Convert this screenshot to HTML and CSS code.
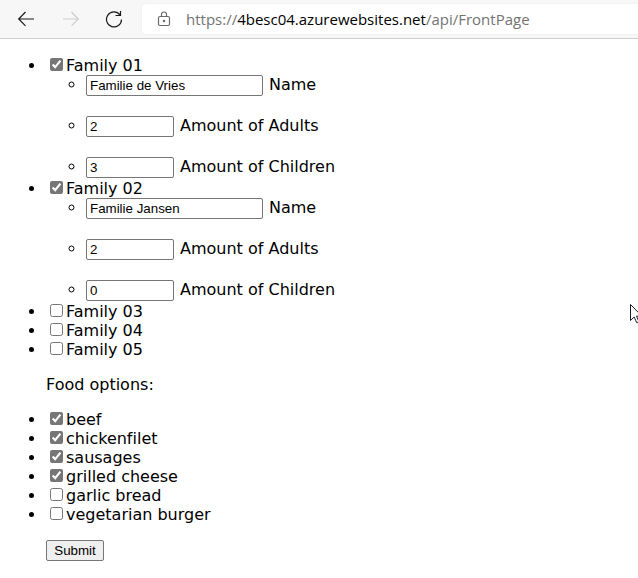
FILE: index.html
```html
<!DOCTYPE html>
<html lang="en">
<head>
<meta charset="utf-8">
<title>FrontPage</title>
<link rel="stylesheet" href="styles.css">
</head>
<body>
<header class="toolbar">
  <svg class="icon back" width="18" height="18" viewBox="0 0 18 18"><path d="M8.5 2 1.7 9l6.8 6.8M1.7 9H17"/></svg>
  <svg class="icon forward" width="18" height="18" viewBox="0 0 18 18"><path d="M9.5 2l6.8 7-6.8 6.8M16.3 9H1"/></svg>
  <svg class="icon reload" width="18" height="18" viewBox="0 0 18 18"><path d="M14.9 4.8A7.5 7.5 0 1 0 16.5 9.5M15.5 1v4.5H10.5"/></svg>
  <div class="address">
    <svg class="icon lock" width="14" height="16" viewBox="0 0 14 16"><rect x="1.5" y="5.5" width="11" height="9" rx="1.5"/><path d="M4.5 5.5V3.5a2.5 2.5 0 0 1 5 0v2"/><circle cx="7" cy="10" r=".6"/></svg>
    <span class="url">https://<b>4besc04.azurewebsites.net</b>/api/FrontPage</span>
  </div>
</header>
<form class="page">
  <ul class="list">
    <li><label class="option"><input type="checkbox" checked>Family 01</label>
      <ul class="fields">
        <li><label class="field"><input class="name" type="text" value="Familie de Vries">Name</label></li>
        <li><label class="field"><input class="amount" type="text" value="2">Amount of Adults</label></li>
        <li><label class="field"><input class="amount" type="text" value="3">Amount of Children</label></li>
      </ul>
    </li>
    <li><label class="option"><input type="checkbox" checked>Family 02</label>
      <ul class="fields">
        <li><label class="field"><input class="name" type="text" value="Familie Jansen">Name</label></li>
        <li><label class="field"><input class="amount" type="text" value="2">Amount of Adults</label></li>
        <li><label class="field"><input class="amount" type="text" value="0">Amount of Children</label></li>
      </ul>
    </li>
    <li><label class="option"><input type="checkbox">Family 03</label></li>
    <li><label class="option"><input type="checkbox">Family 04</label></li>
    <li><label class="option"><input type="checkbox">Family 05</label></li>
  </ul>
  <p class="heading">Food options:</p>
  <ul class="list">
    <li><label class="option"><input type="checkbox" checked>beef</label></li>
    <li><label class="option"><input type="checkbox" checked>chickenfilet</label></li>
    <li><label class="option"><input type="checkbox" checked>sausages</label></li>
    <li><label class="option"><input type="checkbox" checked>grilled cheese</label></li>
    <li><label class="option"><input type="checkbox">garlic bread</label></li>
    <li><label class="option"><input type="checkbox">vegetarian burger</label></li>
  </ul>
  <button class="submit" type="button">Submit</button>
</form>
<svg class="cursor" width="8" height="20" viewBox="0 0 8 20"><path d="M.5.5v16l3.7-3.5 2.5 5.7 2.3-1-2.5-5.5H12z"/></svg>
</body>
</html>
```
FILE: styles.css
```css
* { box-sizing: border-box; }
body {
  margin: 0;
  height: 578px;
  overflow: hidden;
  background: #fff;
  color: #000;
  font: 16px/19px "DejaVu Sans", Verdana, sans-serif;
  font-variant-ligatures: none;
}
.toolbar {
  display: flex;
  align-items: center;
  height: 39px;
  padding-left: 17px;
  background: #f7f7f7;
  border-bottom: 1px solid #cecece;
}
.icon { flex: none; fill: none; stroke: #1b1b1b; stroke-width: 1.2; }
.forward { margin-left: 27px; stroke: #cdcdcd; }
.reload { margin-left: 25px; }
.address {
  display: flex;
  align-items: center;
  flex: 1;
  height: 30px;
  margin-left: 19px;
  padding-left: 15px;
  background: #fff;
  border-radius: 4px 0 0 4px;
  box-shadow: 0 0 2px #e4e4e4;
}
.lock { stroke: #6b6b6b; }
.url {
  margin-left: 15px;
  color: #737373;
  font: 15px/20px "Open Sans", sans-serif;
  white-space: nowrap;
}
.url b { color: #000; font-weight: 400; }
.page { padding: 17px 6px 0; }
.list { margin: 0; padding-left: 40px; }
.fields { margin: 0; padding-left: 40px; list-style: circle; }
.fields li { height: 22px; }
.fields li + li { margin-top: 19px; }
.option { display: block; height: 19px; line-height: 17px; white-space: nowrap; }
.option input {
  width: 13px;
  height: 13px;
  margin: 2px 3px 3px 4px;
  accent-color: #767676;
}
.field { display: block; height: 22px; white-space: nowrap; }
.field input {
  height: 21px;
  margin: 0 6px 0 0;
  padding: 1px 3px;
  border: 1px solid #767676;
  border-radius: 2px;
  background: #fff;
  color: #000;
  font: 13.333px "Liberation Sans", Arial, sans-serif;
}
.field .name { width: 177px; }
.field .amount { width: 88px; }
.heading { margin: 16px 0 16px 40px; }
.submit {
  display: block;
  width: 58px;
  height: 21px;
  margin: 16px 0 0 40px;
  padding: 0;
  border: 1px solid #767676;
  border-radius: 2px;
  background: #efefef;
  color: #000;
  font: 13.333px "Liberation Sans", Arial, sans-serif;
}
.cursor {
  position: absolute;
  top: 304px;
  right: 0;
  fill: #fff;
  stroke: #1b1b2b;
}
```
